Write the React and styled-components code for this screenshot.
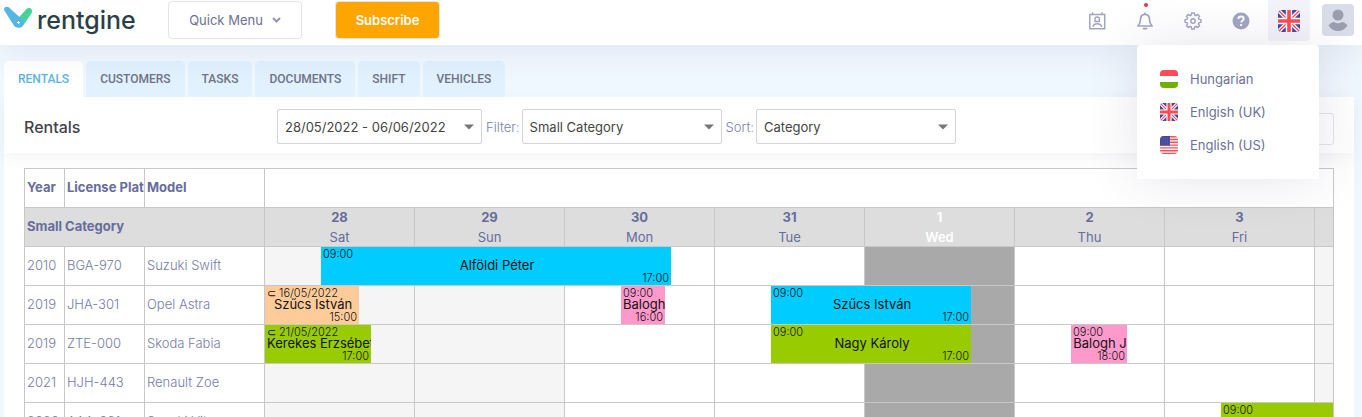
import React from "react";
import styled, { createGlobalStyle } from "styled-components";

const GlobalStyle = createGlobalStyle`
  *, *::before, *::after { box-sizing: border-box; }
  body {
    margin: 0;
    background: #f0f8ff;
    color: #6c7293;
    font: 400 13px/20px Inter, "Noto Sans", sans-serif;
  }
  button, select { font: inherit; color: inherit; }
`;

const Page = styled.div`
  height: 100vh;
  overflow: hidden;
`;

const Header = styled.header`
  position: relative;
  z-index: 10;
  display: flex;
  align-items: flex-start;
  height: 45px;
  padding: 0 8px 0 4px;
  background: #fff;
  box-shadow: 0 10px 30px 0 rgba(82, 63, 105, 0.08);
`;

const Logo = styled.a`
  display: flex;
  gap: 5px;
  width: 164px;
  color: #2b3f47;
  font-size: 25px;
  font-weight: 500;
  line-height: 40px;
  text-decoration: none;
  svg { flex: none; margin-top: 6px; }
`;

const QuickMenu = styled.button`
  display: flex;
  align-items: center;
  justify-content: center;
  gap: 9px;
  width: 134px;
  height: 38px;
  margin: 1px 33px 0 0;
  padding: 0;
  border: 1px solid #e2e5ec;
  border-radius: 4px;
  background: #fff;
`;

const Subscribe = styled.button`
  width: 105px;
  height: 38px;
  margin-top: 1px;
  padding: 0;
  border: 1px solid #e2e5ec;
  border-radius: 4px;
  background: #ffa500;
  color: #fff;
  font-weight: 600;
`;

const HeaderTools = styled.div`
  display: flex;
  margin-left: auto;
`;

const IconButton = styled.button`
  position: relative;
  display: grid;
  place-items: center;
  width: 42px;
  height: 41px;
  margin-right: ${(p) => (p.$last ? 7 : 0)}px;
  padding: 0;
  border: 0;
  border-radius: 0 0 4px 4px;
  background: ${(p) => (p.$active ? "#f3f3fb" : "transparent")};
  color: #a1a5c3;
  & + & { margin-left: 6px; }
`;

const Dot = styled.span`
  position: absolute;
  top: 3px;
  left: 20px;
  width: 4px;
  height: 4px;
  border-radius: 50%;
  background: #e5344a;
`;

const Avatar = styled.button`
  width: 32px;
  height: 32px;
  margin: 4px 0 0 5px;
  padding: 0;
  border: 0;
  border-radius: 4px;
  overflow: hidden;
  background: #d9dde9;
`;

const LanguageMenu = styled.ul`
  position: absolute;
  top: 45px;
  right: 43px;
  width: 182px;
  margin: 0;
  padding: 17px 0 18px;
  list-style: none;
  border-radius: 4px;
  background: #fff;
  box-shadow: 0 0 50px 0 rgba(82, 63, 105, 0.15);
`;

const LanguageLink = styled.a`
  display: flex;
  align-items: center;
  gap: 12px;
  height: 33px;
  padding-left: 23px;
  color: #6c7293;
  text-decoration: none;
`;

const Tabs = styled.nav`
  display: flex;
  gap: 3px;
  padding: 16px 4px 0;
`;

const Tab = styled.a`
  height: 36px;
  padding: 0 14px;
  border-radius: 5px 5px 0 0;
  background: ${(p) => (p.$active ? "#fff" : "#e1f1fe")};
  color: ${(p) => (p.$active ? "#5bb5dd" : "#6f7289")};
  font: 500 12px/36px Roboto, "Liberation Sans", sans-serif;
  text-decoration: none;
`;

const Card = styled.main`
  margin: 0 8px 0 4px;
  background: #fff;
`;

const Toolbar = styled.div`
  display: flex;
  align-items: center;
  height: 56px;
  padding: 3px 20px 0;
  box-shadow: 0 5px 15px 0 rgba(82, 63, 105, 0.06);
`;

const Title = styled.h1`
  width: 253px;
  margin: 0;
  color: #434349;
  font-size: 16px;
  font-weight: 500;
`;

const FieldLabel = styled.label`
  padding: 0 2px 0 4px;
  color: #7b81a6;
  font-weight: 300;
`;

const SelectBox = styled.div`
  position: relative;
  width: ${(p) => p.$width}px;
  svg {
    position: absolute;
    top: 15px;
    right: 8px;
    pointer-events: none;
  }
`;

const Select = styled.select`
  display: block;
  width: 100%;
  height: 35px;
  padding: 0 24px 0 7px;
  border: 1px solid #d5d5d5;
  border-radius: 2px;
  background: #fff;
  color: #444;
  appearance: none;
`;

const ViewButton = styled.button`
  width: 60px;
  height: 32px;
  margin: 4px 0 0 auto;
  border: 1px solid #e2e5ec;
  border-radius: 3px;
  background: #fff;
`;

const Schedule = styled.div`
  display: flex;
  margin: 15px 20px 0;
  border: 1px solid #c8c8c8;
`;

const Timeline = styled.div`
  position: relative;
  flex: 1;
  min-width: 0;
  overflow: hidden;
`;

const Grid = styled.table`
  width: ${(p) => p.$width}px;
  table-layout: fixed;
  border-spacing: 0;
`;

const HeadCell = styled.th`
  height: 39px;
  padding: 0 0 2px 2px;
  overflow: hidden;
  border: solid #c8c8c8;
  border-width: 0 1px 1px 0;
  background: ${(p) => (p.$shaded ? "#ddd" : "#fff")};
  color: #666d9b;
  font-weight: 700;
  text-align: left;
  white-space: nowrap;
`;

const Cell = styled.td`
  height: 39px;
  padding: 0 0 2px 2px;
  border: solid #c8c8c8;
  border-width: 0 1px 1px 0;
  color: #767ca5;
  font-weight: 300;
  white-space: nowrap;
`;

const DayHead = styled(HeadCell)`
  padding: 0;
  color: ${(p) => (p.$today ? "#fff" : "#666d9b")};
  text-align: center;
`;

const DayLabel = styled.div`
  height: 38px;
  overflow: hidden;
  line-height: 18px;
  span {
    display: block;
    font-weight: ${(p) => (p.$today ? 600 : 400)};
    line-height: 22px;
  }
`;

const dayColors = { weekend: "#f5f5f5", today: "#a9a9a9", work: "#fff" };

const DayCell = styled.td`
  position: relative;
  height: 39px;
  padding: 0;
  border: solid #c8c8c8;
  border-width: 0 1px 1px 0;
  background: ${(p) => dayColors[p.$kind]};
`;

const Bar = styled.div`
  position: absolute;
  z-index: 1;
  top: 0;
  display: grid;
  grid-template: 38px / 100%;
  overflow: hidden;
  background: ${(p) => p.$color};
  color: #111;
  white-space: nowrap;
`;

const BarTime = styled.span`
  grid-area: 1 / 1;
  place-self: ${(p) => (p.$end ? "end" : "start")};
  padding: 0 2px;
  font-size: 11px;
  font-weight: 300;
  line-height: 14px;
`;

const BarName = styled.span`
  grid-area: 1 / 1;
  align-self: center;
  padding: 0 0 2px 2px;
  text-align: center;
`;

function UnionJack({ size }) {
  return (
    <svg width={size} height={size} viewBox="0 0 22 22" aria-hidden="true">
      <defs>
        <clipPath id={"uk" + size}><rect width="22" height="22" rx="4" /></clipPath>
      </defs>
      <g clipPath={`url(#uk${size})`}>
        <rect width="22" height="22" fill="#41479b" />
        <path d="M0 0l22 22M22 0L0 22" stroke="#fff" strokeWidth="4" />
        <path d="M0 0l22 22M22 0L0 22" stroke="#ff4b55" strokeWidth="1.4" />
        <path d="M11 0v22M0 11h22" stroke="#fff" strokeWidth="6.4" />
        <path d="M11 0v22M0 11h22" stroke="#ff4b55" strokeWidth="3.6" />
      </g>
    </svg>
  );
}

function HungarianFlag() {
  return (
    <svg width="18" height="18" viewBox="0 0 18 18" aria-hidden="true">
      <path d="M4 0h10a4 4 0 0 1 4 4v2H0V4a4 4 0 0 1 4-4z" fill="#ff4b55" />
      <path d="M0 6h18v6H0z" fill="#fafafa" />
      <path d="M0 12h18v2a4 4 0 0 1-4 4H4a4 4 0 0 1-4-4z" fill="#73af00" />
    </svg>
  );
}

function AmericanFlag() {
  return (
    <svg width="18" height="18" viewBox="0 0 18 18" aria-hidden="true">
      <defs>
        <clipPath id="us"><rect width="18" height="18" rx="4" /></clipPath>
      </defs>
      <g clipPath="url(#us)">
        <rect width="18" height="18" fill="#fff" />
        <path d="M0 .7h18M0 3.5h18M0 6.3h18M0 9.1h18M0 11.9h18M0 14.7h18M0 17.5h18" stroke="#ff4b55" strokeWidth="1.4" />
        <rect width="10" height="9.6" fill="#41479b" />
        <path d="M1.5 2h8M1.5 4h8M1.5 6h8M1.5 8h8" stroke="#9fa3cd" strokeWidth=".5" strokeDasharray=".8 1" />
      </g>
    </svg>
  );
}

function LogoMark() {
  return (
    <svg width="28" height="23" viewBox="0 0 28 23" aria-hidden="true">
      <path d="M22 3.500C24 1.300 26.500 1.600 27.500 3.200S28 6.500 27 8L19.500 19 14 12.500z" fill="#45d39b" />
      <path d="M.3 4.500C-.5 2.200 1 .6 3 .8c1.500.2 2.500 1.200 3.800 2.500l11 9.700c2.500 2.200 2.600 5 .8 7.200-1.800 2-5.300 2.200-7.400.6-1.400-1-2-2.300-2.900-3.800z" fill="#54b6e2" />
      <path d="M14.500 15v3M13 16.500h3" stroke="#fff" strokeWidth="1" />
    </svg>
  );
}

function Caret() {
  return (
    <svg width="10" height="6" viewBox="0 0 10 6" aria-hidden="true">
      <path d="M0 .5h10L5 5.500z" fill="#777" />
    </svg>
  );
}

const stroke = { fill: "none", stroke: "currentColor", strokeWidth: 1.5, strokeLinejoin: "round", strokeLinecap: "round" };

function ContactIcon() {
  return (
    <svg width="18" height="18" viewBox="0 0 18 18" {...stroke} strokeLinejoin="miter" aria-hidden="true">
      <path d="M1.800 2.500h14.900v14.200H1.800zM4.500.8v2M14 .8v2" />
      <path d="M7 9.500V7.200a2.200 2.200 0 0 1 4.400 0v2.300zM5 14.200c.6-1.800 2-2.400 4.200-2.400s3.600.6 4.200 2.400" />
    </svg>
  );
}

function BellIcon() {
  return (
    <svg width="18" height="18" viewBox="0 0 18 18" {...stroke} strokeWidth="1.7" aria-hidden="true">
      <path d="M9 2.300C6 2.300 4.500 4.600 4.500 7.500c0 3.500-1 4.900-2.600 6.500h14.200c-1.600-1.600-2.600-3-2.600-6.500 0-2.900-1.500-5.200-4.500-5.200zM9 1v1.300M7.500 16.600h3" />
    </svg>
  );
}

function GearIcon() {
  const teeth = [];
  for (let i = 0; i < 8; i++) {
    const a = (i * Math.PI) / 4;
    const at = (r, off) => `${(9 + r * Math.sin(a + off)).toFixed(2)} ${(9 - r * Math.cos(a + off)).toFixed(2)}`;
    teeth.push(`${i ? "L" : "M"}${at(6.2, -0.27)}L${at(8.1, -0.17)}L${at(8.1, 0.17)}L${at(6.2, 0.27)}`);
  }
  return (
    <svg width="18" height="18" viewBox="0 0 18 18" {...stroke} strokeWidth="1.4" aria-hidden="true">
      <path d={teeth.join("") + "Z"} />
      <circle cx="9" cy="9" r="2.200" />
    </svg>
  );
}

function HelpIcon() {
  return (
    <svg width="18" height="18" viewBox="0 0 18 18" aria-hidden="true">
      <circle cx="9" cy="9" r="8.500" fill="currentColor" />
      <path d="M6.300 7C6.400 5.300 7.500 4.500 9 4.500s2.700.9 2.700 2.300c0 1.900-2.500 2-2.500 3.800" fill="none" stroke="#fff" strokeWidth="1.900" />
      <circle cx="9.100" cy="13.100" r="1.200" fill="#fff" />
    </svg>
  );
}

function Dropdown({ id, width, value, label }) {
  return (
    <SelectBox $width={width}>
      <Select id={id} aria-label={label} defaultValue={value}>
        <option>{value}</option>
      </Select>
      <Caret />
    </SelectBox>
  );
}

const DAY_WIDTH = 150;
const days = [
  { date: "28", name: "Sat", kind: "weekend" },
  { date: "29", name: "Sun", kind: "weekend" },
  { date: "30", name: "Mon", kind: "work" },
  { date: "31", name: "Tue", kind: "work" },
  { date: "1", name: "Wed", kind: "today" },
  { date: "2", name: "Thu", kind: "work" },
  { date: "3", name: "Fri", kind: "work" },
  { date: "4", name: "Sat", kind: "weekend" },
  { date: "5", name: "Sun", kind: "weekend" },
  { date: "6", name: "Mon", kind: "work" },
];

const BLUE = "#0cf";
const GREEN = "#9c0";
const PINK = "#f9c";
const PEACH = "#fc9";

const vehicles = [
  { year: "2010", plate: "BGA-970", model: "Suzuki Swift", bookings: [
    { day: 0, from: 9, hours: 56, name: "Alföldi Péter", start: "09:00", end: "17:00", color: BLUE },
  ] },
  { year: "2019", plate: "JHA-301", model: "Opel Astra", bookings: [
    { day: 0, from: 0, hours: 15, name: "Szűcs István", start: "⊂ 16/05/2022", end: "15:00", color: PEACH },
    { day: 2, from: 9, hours: 7, name: "Balogh J", start: "09:00", end: "16:00", color: PINK },
    { day: 3, from: 9, hours: 32, name: "Szűcs István", start: "09:00", end: "17:00", color: BLUE },
  ] },
  { year: "2019", plate: "ZTE-000", model: "Skoda Fabia", bookings: [
    { day: 0, from: 0, hours: 17, name: "Kerekes Erzsébet", start: "⊂ 21/05/2022", end: "17:00", color: GREEN },
    { day: 3, from: 9, hours: 32, name: "Nagy Károly", start: "09:00", end: "17:00", color: GREEN },
    { day: 5, from: 9, hours: 9, name: "Balogh J", start: "09:00", end: "18:00", color: PINK },
  ] },
  { year: "2021", plate: "HJH-443", model: "Renault Zoe", bookings: [] },
  { year: "2020", plate: "AAA-021", model: "Suzuki Vitara", bookings: [
    { day: 6, from: 9, hours: 60, name: "", start: "09:00", end: "", color: GREEN },
  ] },
];

const hoursToPx = (hours) => Math.round((hours * DAY_WIDTH) / 24);

function Booking({ booking }) {
  return (
    <Bar
      $color={booking.color}
      style={{ left: hoursToPx(booking.from), width: hoursToPx(booking.hours) }}
    >
      <BarTime>{booking.start}</BarTime>
      <BarName>{booking.name}</BarName>
      <BarTime $end>{booking.end}</BarTime>
    </Bar>
  );
}

const tabs = ["RENTALS", "CUSTOMERS", "TASKS", "DOCUMENTS", "SHIFT", "VEHICLES"];

export default function App() {
  return (
    <Page>
      <GlobalStyle />
      <Header>
        <Logo href="#home"><LogoMark />rentgine</Logo>
        <QuickMenu>
          Quick Menu
          <svg width="9" height="6" viewBox="0 0 9 6" fill="none" stroke="#8f94bb" strokeWidth="2" aria-hidden="true">
            <path d="M1 1l3.500 3.500L8 1" />
          </svg>
        </QuickMenu>
        <Subscribe>Subscribe</Subscribe>
        <HeaderTools>
          <IconButton aria-label="Contacts"><ContactIcon /></IconButton>
          <IconButton aria-label="Notifications"><BellIcon /><Dot /></IconButton>
          <IconButton aria-label="Settings"><GearIcon /></IconButton>
          <IconButton aria-label="Help"><HelpIcon /></IconButton>
          <IconButton aria-label="Language" $active $last><UnionJack size={22} /></IconButton>
          <Avatar aria-label="Profile">
            <svg width="32" height="32" viewBox="0 0 32 32" fill="#9a9fb0" aria-hidden="true">
              <circle cx="16" cy="11" r="5.500" />
              <path d="M6.500 21.500c2-2.500 4-3.500 5.500-3.500 2.500 1.800 5.500 1.800 8 0 1.500 0 3.500 1 5.500 3.500-2 3.500-5.500 5.500-9.500 5.500s-7.500-2-9.500-5.500z" />
            </svg>
          </Avatar>
        </HeaderTools>
        <LanguageMenu>
          <li><LanguageLink href="#hu"><HungarianFlag />Hungarian</LanguageLink></li>
          <li><LanguageLink href="#uk"><UnionJack size={18} />Enlgish (UK)</LanguageLink></li>
          <li><LanguageLink href="#us"><AmericanFlag />English (US)</LanguageLink></li>
        </LanguageMenu>
      </Header>
      <Tabs>
        {tabs.map((tab, i) => (
          <Tab key={tab} href={"#" + tab.toLowerCase()} $active={i === 0}>{tab}</Tab>
        ))}
      </Tabs>
      <Card>
        <Toolbar>
          <Title>Rentals</Title>
          <Dropdown label="Period" width={205} value="28/05/2022 - 06/06/2022" />
          <FieldLabel htmlFor="filter">Filter:</FieldLabel>
          <Dropdown id="filter" width={200} value="Small Category" />
          <FieldLabel htmlFor="sort">Sort:</FieldLabel>
          <Dropdown id="sort" width={200} value="Category" />
          <ViewButton aria-label="View" />
        </Toolbar>
        <Schedule>
          <Grid $width={240}>
            <colgroup><col width="40" /><col width="80" /><col width="120" /></colgroup>
            <thead>
              <tr>
                <HeadCell>Year</HeadCell>
                <HeadCell>License Plate</HeadCell>
                <HeadCell>Model</HeadCell>
              </tr>
            </thead>
            <tbody>
              <tr><HeadCell colSpan={3} $shaded>Small Category</HeadCell></tr>
              {vehicles.map((v) => (
                <tr key={v.plate}>
                  <Cell>{v.year}</Cell>
                  <Cell>{v.plate}</Cell>
                  <Cell>{v.model}</Cell>
                </tr>
              ))}
            </tbody>
          </Grid>
          <Timeline>
            <Grid $width={DAY_WIDTH * days.length}>
              <colgroup>{days.map((d) => <col key={d.date} width={DAY_WIDTH} />)}</colgroup>
              <thead>
                <tr><HeadCell as="td" colSpan={days.length} /></tr>
                <tr>
                  {days.map((d) => (
                    <DayHead key={d.date} $shaded $today={d.kind === "today"}>
                      <DayLabel $today={d.kind === "today"}>{d.date}<span>{d.name}</span></DayLabel>
                    </DayHead>
                  ))}
                </tr>
              </thead>
              <tbody>
                {vehicles.map((v) => (
                  <tr key={v.plate}>
                    {days.map((d, i) => (
                      <DayCell key={d.date} $kind={d.kind}>
                        {v.bookings.filter((b) => b.day === i).map((b) => (
                          <Booking key={b.day} booking={b} />
                        ))}
                      </DayCell>
                    ))}
                  </tr>
                ))}
              </tbody>
            </Grid>
          </Timeline>
        </Schedule>
      </Card>
    </Page>
  );
}
